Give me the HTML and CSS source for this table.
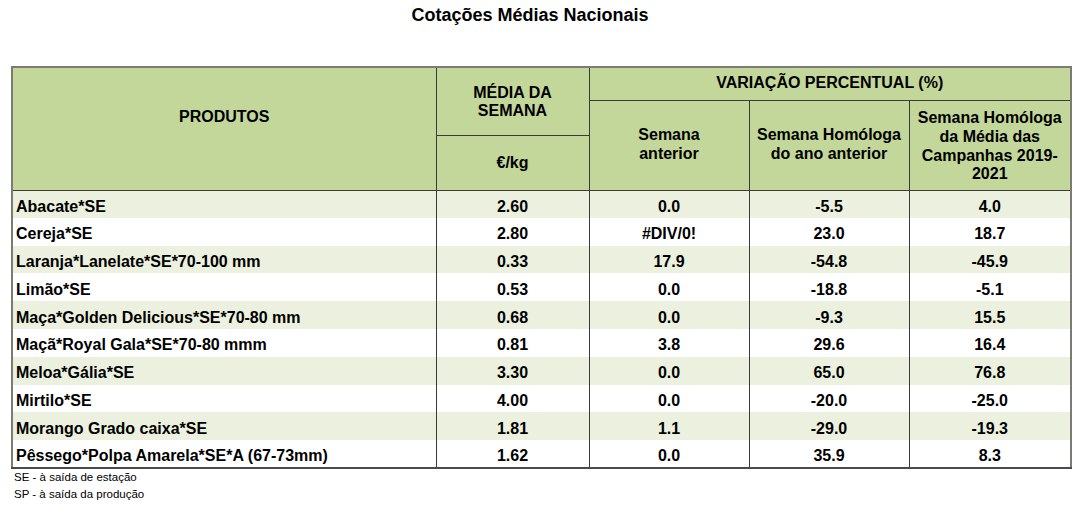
FILE: index.html
```html
<!DOCTYPE html>
<html lang="pt">
<head>
<meta charset="utf-8">
<title>Cotações Médias Nacionais</title>
<link rel="stylesheet" href="styles.css">
</head>
<body>
<div class="page">
  <h1 class="title">Cotações Médias Nacionais</h1>
  <table class="quotes">
    <colgroup>
      <col class="c-prod">
      <col class="c-avg">
      <col class="c-var">
      <col class="c-var">
      <col class="c-var2">
    </colgroup>
    <thead>
      <tr class="h1">
        <th rowspan="3" class="prod-h">PRODUTOS</th>
        <th rowspan="2" class="avg-h">MÉDIA DA<br>SEMANA</th>
        <th colspan="3" class="var-h">VARIAÇÃO PERCENTUAL (%)</th>
      </tr>
      <tr class="h2">
        <th rowspan="2">Semana<br>anterior</th>
        <th rowspan="2">Semana Homóloga<br>do ano anterior</th>
        <th rowspan="2" class="camp">Semana Homóloga<br>da Média das<br>Campanhas 2019-<br>2021</th>
      </tr>
      <tr class="h3">
        <th class="unit">€/kg</th>
      </tr>
    </thead>
    <tbody>
      <tr class="alt"><td class="name">Abacate*SE</td><td>2.60</td><td>0.0</td><td>-5.5</td><td>4.0</td></tr>
      <tr><td class="name">Cereja*SE</td><td>2.80</td><td>#DIV/0!</td><td>23.0</td><td>18.7</td></tr>
      <tr class="alt"><td class="name">Laranja*Lanelate*SE*70-100 mm</td><td>0.33</td><td>17.9</td><td>-54.8</td><td>-45.9</td></tr>
      <tr><td class="name">Limão*SE</td><td>0.53</td><td>0.0</td><td>-18.8</td><td>-5.1</td></tr>
      <tr class="alt"><td class="name">Maça*Golden Delicious*SE*70-80 mm</td><td>0.68</td><td>0.0</td><td>-9.3</td><td>15.5</td></tr>
      <tr><td class="name">Maçã*Royal Gala*SE*70-80 mmm</td><td>0.81</td><td>3.8</td><td>29.6</td><td>16.4</td></tr>
      <tr class="alt"><td class="name">Meloa*Gália*SE</td><td>3.30</td><td>0.0</td><td>65.0</td><td>76.8</td></tr>
      <tr><td class="name">Mirtilo*SE</td><td>4.00</td><td>0.0</td><td>-20.0</td><td>-25.0</td></tr>
      <tr class="alt"><td class="name">Morango Grado caixa*SE</td><td>1.81</td><td>1.1</td><td>-29.0</td><td>-19.3</td></tr>
      <tr><td class="name">Pêssego*Polpa Amarela*SE*A (67-73mm)</td><td>1.62</td><td>0.0</td><td>35.9</td><td>8.3</td></tr>
    </tbody>
  </table>
  <div class="notes">
    <p>SE - à saída de estação</p>
    <p>SP - à saída da produção</p>
  </div>
</div>
</body>
</html>
```

FILE: styles.css
```css
* { box-sizing: border-box; }

html, body {
  margin: 0;
  padding: 0;
  background: #ffffff;
}

body {
  font-family: "Liberation Sans", Arial, sans-serif;
  color: #000000;
}

.page {
  width: 1086px;
  height: 506px;
  padding: 0 0 0 11px;
}

.title {
  margin: 0;
  padding: 5px 0 0 0;
  height: 66px;
  width: 1038px;
  text-align: center;
  font-size: 18px;
  line-height: 21px;
  font-weight: bold;
}

.quotes {
  border-collapse: collapse;
  table-layout: fixed;
  width: 1059px;
  border: 2px solid #7b7b73;
}

.c-prod { width: 424px; }
.c-avg { width: 153px; }
.c-var { width: 160px; }
.c-var2 { width: 162px; }

.quotes th {
  background: #c4d79b;
  font-size: 16px;
  font-weight: bold;
  line-height: 18.7px;
  text-align: center;
  vertical-align: middle;
  border: 1px solid #3a3a3a;
  padding: 0 2px;
}

.quotes .h1 th { border-top: 2px solid #7b7b73; }
.quotes th.prod-h {
  border-left: 2px solid #7b7b73;
  padding-bottom: 22px;
}

.quotes .h1 { height: 33px; }
.quotes .h2 { height: 35px; }
.quotes .h3 { height: 55px; }

.quotes th.avg-h { padding-top: 2px; }
.quotes th.unit { padding-top: 2px; }
.quotes th.camp { padding-top: 3px; }

.quotes tbody tr { height: 27.8px; }
.quotes tbody tr.alt td { background: #ebf1de; }

.quotes td {
  font-size: 16px;
  font-weight: bold;
  line-height: 18px;
  text-align: center;
  vertical-align: middle;
  padding: 5px 2px 0 2px;
  border-left: 1px solid #3a3a3a;
  border-right: 1px solid #3a3a3a;
  white-space: nowrap;
}

.quotes td.name {
  text-align: left;
  padding-left: 3px;
}

.quotes tbody tr:first-child td { border-top: 1px solid #3a3a3a; }
.quotes tbody tr:last-child td { border-bottom: 2px solid #4a4a4a; }

.notes {
  padding: 0 0 0 3px;
}

.notes p {
  margin: 0;
  font-size: 11.5px;
  line-height: 17px;
}
```
